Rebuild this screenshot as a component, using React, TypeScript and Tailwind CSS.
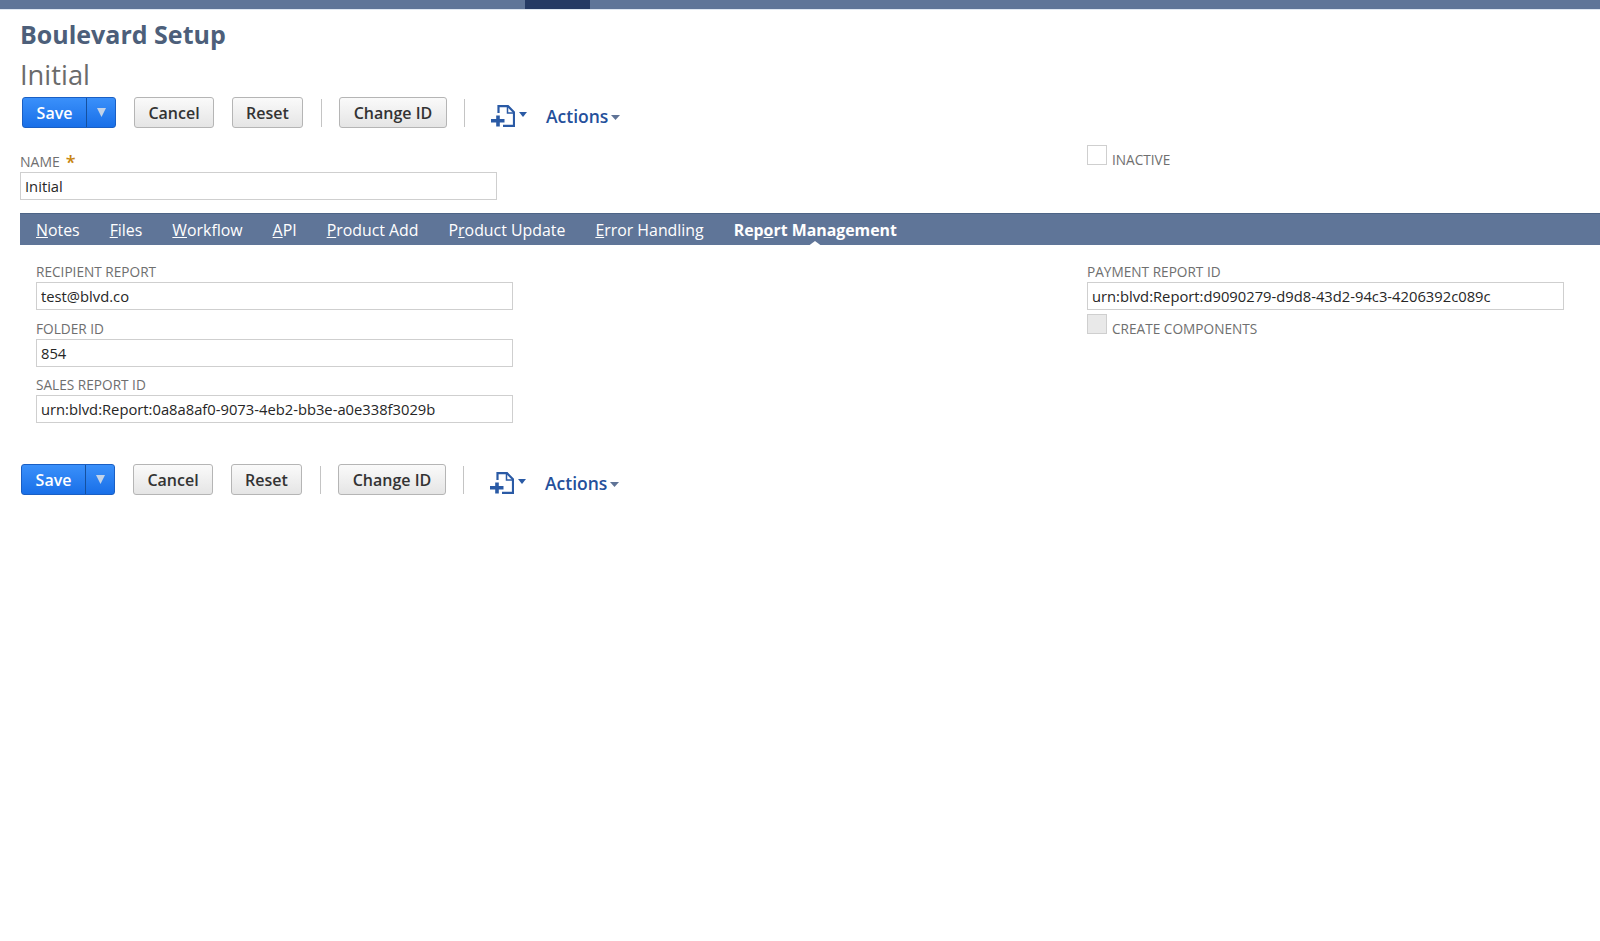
const font = { fontFamily: '"Open Sans", sans-serif' };

const Caret = ({ className }: { className: string }) => (
  <svg viewBox="0 0 10 6" preserveAspectRatio="none" className={className} fill="currentColor">
    <path d="M0 0h10L5 6z" />
  </svg>
);

const Button = ({ children, className }: { children: string; className: string }) => (
  <button className={`h-[31px] rounded-[3px] border border-[#b5b5b5] bg-gradient-to-b from-[#fafafa] to-[#e5e5e5] text-[16px] font-semibold text-[#333] ${className}`}>
    {children}
  </button>
);

const Divider = () => <div className="h-[28px] w-px bg-[#c4c4c4]" />;

const NewIcon = () => (
  <svg viewBox="0 0 24 22" className="h-[22px] w-[24px] text-[#2a5aa5]" fill="none" stroke="currentColor">
    <path d="M7.5 8V1.2h9.5l6 6V20.8H12" strokeWidth="2.2" />
    <path d="M16.5 1.2V8H23" strokeWidth="1.5" />
    <path d="M7 10.5v11M0 15.8h13.5" strokeWidth="3.6" />
  </svg>
);

const Toolbar = ({ className }: { className: string }) => (
  <div className={`flex h-[31px] items-center ${className}`}>
    <div className="flex h-[31px] w-[94px] overflow-hidden rounded-[3px] border border-[#1a5fc4] bg-gradient-to-b from-[#3a90fa] to-[#186fe8] text-white">
      <span className="flex w-[63px] items-center justify-center text-[16px] font-semibold">Save</span>
      <span className="flex flex-1 items-center justify-center border-l border-[#15509f]">
        <Caret className="h-[9px] w-[9px] text-[#c3d3e8]" />
      </span>
    </div>
    <Button className="ml-[18px] w-[80px]">Cancel</Button>
    <Button className="ml-[18px] w-[71px]">Reset</Button>
    <div className="ml-[18px]"><Divider /></div>
    <Button className="ml-[17px] w-[108px]">Change ID</Button>
    <div className="ml-[17px]"><Divider /></div>
    <div className="ml-[26px] mt-[6px] flex items-center gap-[4px]">
      <NewIcon />
      <Caret className="mb-[2px] h-[5px] w-[8px] text-[#2a5aa5]" />
    </div>
    <div className="ml-[19px] mt-[7px] flex items-center gap-[3px] text-[#24509b]">
      <span className="text-[17.5px] font-semibold leading-[24px]">Actions</span>
      <Caret className="mt-[3px] h-[5px] w-[9px] text-[#5f7396]" />
    </div>
  </div>
);

const Field = ({ label, value, className }: { label: string; value: string; className: string }) => (
  <div className={className}>
    <div className="h-[20px] text-[13.65px] uppercase leading-[20px] text-[#6f6f6f]">{label}</div>
    <input
      readOnly
      value={value}
      className="block h-[28px] w-full border border-[#cfcfcf] bg-white px-[4px] text-[14.75px] text-[#262626] outline-none"
    />
  </div>
);

const Check = ({ label, disabled, className }: { label: string; disabled?: boolean; className: string }) => (
  <div className={`flex items-start ${className}`}>
    <div className={`h-[20px] w-[20px] border border-[#cfcfcf] ${disabled ? 'bg-[#e9e9e9]' : 'bg-white'}`} />
    <span className="ml-[5px] mt-[5px] text-[13.65px] uppercase leading-[20px] text-[#6f6f6f]">{label}</span>
  </div>
);

const tabs = [
  { pre: '', key: 'N', post: 'otes', ml: 'ml-[16px]' },
  { pre: '', key: 'F', post: 'iles', ml: 'ml-[30px]' },
  { pre: '', key: 'W', post: 'orkflow', ml: 'ml-[30px]' },
  { pre: '', key: 'A', post: 'PI', ml: 'ml-[30px]' },
  { pre: '', key: 'P', post: 'roduct Add', ml: 'ml-[30px]' },
  { pre: 'P', key: 'r', post: 'oduct Update', ml: 'ml-[30px]' },
  { pre: '', key: 'E', post: 'rror Handling', ml: 'ml-[30px]' },
];

export default function App() {
  return (
    <div className="min-h-[941px] bg-white" style={font}>
      <div className="flex h-[10px] border-b border-[#dfe7f1] bg-[#5f7598]">
        <div className="ml-[525px] w-[65px] bg-[#253a64]" />
      </div>

      <h1 className="ml-[20px] mt-[8px] h-[32px] text-[25px] font-bold leading-[32px] text-[#4d5f7a]">Boulevard Setup</h1>
      <h2 className="ml-[20px] mt-[8px] h-[34px] text-[27.3px] leading-[34px] text-[#6b6b6b]">Initial</h2>

      <Toolbar className="ml-[22px] mt-[5px]" />

      <div className="flex pl-[20px] pt-[17px]">
        <div className="w-[477px] pt-[7px]">
          <div className="flex h-[20px] items-center text-[14px] leading-[20px] text-[#6f6f6f]">
            NAME<span className="ml-[6px] text-[18px] font-semibold text-[#c8850f]">*</span>
          </div>
          <input readOnly value="Initial" className="block h-[28px] w-full border border-[#cfcfcf] px-[4px] text-[14.75px] text-[#262626] outline-none" />
        </div>
        <Check label="Inactive" className="ml-[590px]" />
      </div>

      <div className="relative ml-[20px] mt-[13px] flex h-[32px] items-center border-t border-[#4d6486] bg-[#5f7598] pt-[2px] text-[15.88px] text-white">
        {tabs.map((t) => (
          <span key={t.key} className={t.ml}>
            {t.pre}<span className="underline">{t.key}</span>{t.post}
          </span>
        ))}
        <span className="relative ml-[30px] font-bold">
          Rep<span className="underline">o</span>rt Management
          <span className="absolute bottom-[-5px] left-1/2 h-0 w-0 -translate-x-1/2 border-x-[8px] border-b-[6px] border-x-transparent border-b-white" />
        </span>
      </div>

      <div className="flex pl-[36px] pt-[17px]">
        <div className="w-[477px]">
          <Field label="Recipient Report" value="test@blvd.co" className="" />
          <Field label="Folder ID" value="854" className="mt-[9px]" />
          <Field label="Sales Report ID" value="urn:blvd:Report:0a8a8af0-9073-4eb2-bb3e-a0e338f3029b" className="mt-[8px]" />
        </div>
        <div className="ml-[574px] w-[477px]">
          <Field label="Payment Report ID" value="urn:blvd:Report:d9090279-d9d8-43d2-94c3-4206392c089c" className="" />
          <Check label="Create Components" disabled className="mt-[4px]" />
        </div>
      </div>

      <Toolbar className="ml-[21px] mt-[41px]" />
    </div>
  );
}
